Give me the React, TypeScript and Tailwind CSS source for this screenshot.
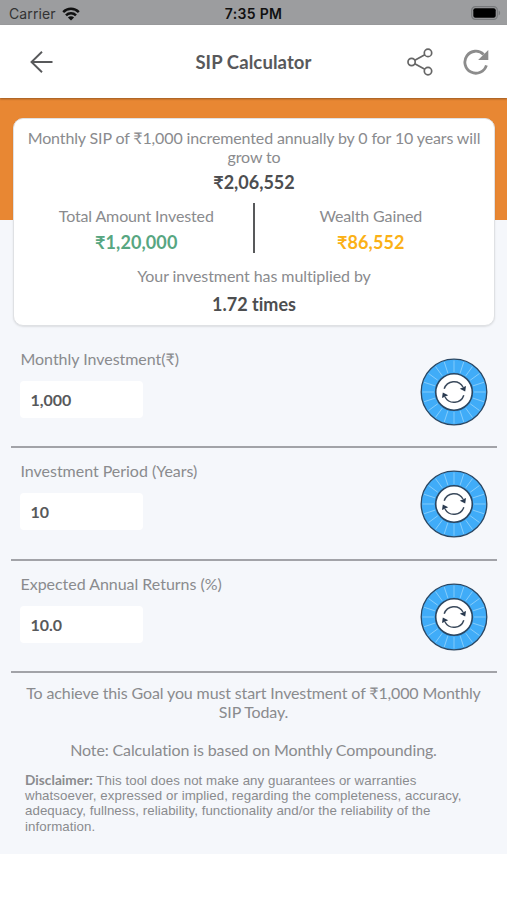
import React, { useState } from 'react';

const WifiIcon = () => (
  <svg className="w-[18px] h-[14px]" viewBox="0 0 18 14" fill="none" stroke="#111" strokeWidth="2.5">
    <path d="M1.2 5.1A11 11 0 0 1 16.8 5.1" />
    <path d="M4 8.3A7 7 0 0 1 14 8.3" />
    <path d="M9 13.6L5.9 10.5A4.4 4.4 0 0 1 12.1 10.5Z" fill="#111" stroke="none" />
  </svg>
);

const BatteryIcon = () => (
  <svg className="w-[30px] h-[14px]" viewBox="0 0 30 14">
    <rect x="0.7" y="0.7" width="25.6" height="12.6" rx="3.6" fill="none" stroke="#77797b" strokeWidth="1.2" />
    <rect x="2.3" y="2.3" width="22.4" height="9.4" rx="2" fill="#000" />
    <path d="M27.6 4.6C29.6 5.2 29.6 8.8 27.6 9.4Z" fill="#77797b" />
  </svg>
);

const BackIcon = () => (
  <svg className="w-6 h-6" viewBox="0 0 24 24" fill="none" stroke="#58595b" strokeWidth="1.9">
    <path d="M23.5 12H2.5M13 1.8L2.5 12L13 22.2" />
  </svg>
);

const ShareIcon = () => (
  <svg className="w-7 h-7" viewBox="0 0 28 28" fill="none" stroke="#666" strokeWidth="1.7">
    <circle cx="5.6" cy="14" r="3.6" />
    <circle cx="22" cy="4.9" r="3.7" />
    <circle cx="22" cy="23.1" r="3.7" />
    <path d="M8.8 12.2L18.8 6.7M8.8 15.8L18.8 21.3" />
  </svg>
);

const ReloadIcon = () => (
  <svg className="w-[26px] h-[26px]" viewBox="0 0 26 26">
    <path d="M20.6 5.4A11 11 0 1 0 23.4 16.4" fill="none" stroke="#8c8c8c" strokeWidth="2.8" />
    <path d="M25.3 1V11H15.1Z" fill="#8c8c8c" />
  </svg>
);

const spokes = Array.from({ length: 20 }, (_, i) => i * 18);

const Dial = () => (
  <svg className="w-[68px] h-[68px]" viewBox="-34 -34 68 68">
    <circle r="32.8" fill="#40acf8" stroke="#2a4763" strokeWidth="1.3" />
    {spokes.map((angle) => (
      <path key={angle} d="M0 -20V-31.5" stroke="#86cdfb" strokeWidth="0.9" transform={`rotate(${angle})`} />
    ))}
    <circle r="18.3" fill="#fff" stroke="#2a4763" strokeWidth="1.6" />
    <g fill="none" stroke="#3b4a5c" strokeWidth="1.5">
      <path d="M-9.8 -3.2A10.3 10.3 0 0 1 9 -5" />
      <path d="M9.8 3.2A10.3 10.3 0 0 1 -9 5" />
    </g>
    <path d="M5.8 -3.2L12 -6L11.2 -0.4Z" fill="#2a3b50" />
    <path d="M-5.8 3.2L-12 6L-11.2 0.4Z" fill="#2a3b50" />
  </svg>
);

const App = () => {
  const [fields, setFields] = useState([
    { label: 'Monthly Investment(₹)', value: '1,000' },
    { label: 'Investment Period (Years)', value: '10' },
    { label: 'Expected Annual Returns (%)', value: '10.0' }
  ]);

  const updateField = (idx: number, value: string) => {
    setFields((prev) => prev.map((field, i) => (i === idx ? { ...field, value } : field)));
  };

  return (
    <div className="w-full h-[900px] overflow-hidden bg-white font-['Lato','Noto_Sans',sans-serif] text-base leading-[19px] tracking-[-0.13px] [font-variant-ligatures:none] text-[#8a8b8e]">
      {/* Status Bar */}
      <div className="grid grid-cols-3 items-center h-[25px] pl-[9px] pr-[6px] pt-[2px] bg-[#9c9d9f] font-['Inter',sans-serif] text-[#111]">
        <div className="flex items-center gap-[6px]">
          <span className="text-[14px] tracking-[0.1px] text-[#333]">Carrier</span>
          <WifiIcon />
        </div>
        <span className="-ml-[3px] text-center text-[14px] tracking-[0.3px] font-semibold">7:35 PM</span>
        <div className="flex justify-end pb-px">
          <BatteryIcon />
        </div>
      </div>

      {/* Header */}
      <header className="relative grid grid-cols-[1fr_auto_1fr] items-center h-[73px] pl-[29px] pr-[18px] bg-white shadow-[0_1px_2px_rgba(0,0,0,0.35)]">
        <button className="w-6">
          <BackIcon />
        </button>
        <h1 className="-ml-[11px] pt-px text-[18.5px] tracking-[0.1px] font-bold text-[#58595b]">SIP Calculator</h1>
        <div className="flex items-center justify-end gap-[29px]">
          <button>
            <ShareIcon />
          </button>
          <button>
            <ReloadIcon />
          </button>
        </div>
      </header>

      <main className="h-[756px] bg-[#f5f7fb]">
        <div className="h-[122px] bg-[#e88733]" />

        {/* Result Card */}
        <section className="relative -mt-[102px] ml-[13px] mr-[12px] h-[208px] pt-[9px] rounded-[10px] border border-[#dfe1e4] bg-white text-center shadow-[0_1px_2px_rgba(0,0,0,0.1)]">
          <p className="px-2">Monthly SIP of ₹1,000 incremented annually by 0 for 10 years will grow to</p>
          <p className="mt-[7px] text-[18px] tracking-normal font-bold text-[#4d4e50]">₹2,06,552</p>
          <div className="flex mt-[11px] h-[50px] pl-px">
            <div className="flex-1 pl-[5px] pt-[3px]">
              <p>Total Amount Invested</p>
              <p className="mt-[8px] text-[18px] tracking-[0.1px] font-bold text-[#57a681]">₹1,20,000</p>
            </div>
            <div className="w-[2px] bg-[#58595b]" />
            <div className="flex-1 pr-[7px] pt-[3px]">
              <p>Wealth Gained</p>
              <p className="mt-[8px] text-[18px] tracking-[0.1px] font-bold text-[#fbb116]">₹86,552</p>
            </div>
          </div>
          <p className="mt-[13px] tracking-[-0.08px]">Your investment has multiplied by</p>
          <p className="mt-[10px] text-[18px] tracking-normal font-bold text-[#4d4e50]">1.72 times</p>
        </section>

        {/* Inputs */}
        <div className="mt-[9.5px] pl-[11px] pr-[10px]">
          {fields.map((field, idx) => (
            <div
              key={field.label}
              className="flex items-start justify-between h-[112.5px] pl-[9px] pr-[9px] border-b-2 border-[#a2a3a8]"
            >
              <div className="flex flex-col gap-[13px] pt-[13px]">
                <label className="pl-[0.5px] tracking-[-0.03px]">{field.label}</label>
                <input
                  value={field.value}
                  onChange={(e) => updateField(idx, e.target.value)}
                  className="w-[123px] h-[37px] px-[10.5px] rounded-[4px] bg-white font-bold tracking-normal text-[#58595b] outline-none"
                />
              </div>
              <div className="pt-[22px]">
                <Dial />
              </div>
            </div>
          ))}
        </div>

        {/* Notes */}
        <div className="pt-[9.5px] px-5 text-center">
          <p>To achieve this Goal you must start Investment of ₹1,000 Monthly SIP Today.</p>
          <p className="mt-[19px]">Note: Calculation is based on Monthly Compounding.</p>
        </div>
        <p className="mt-[14px] pl-[25px] pr-10 font-['Liberation_Sans',sans-serif] text-[13.3px] tracking-[0.06px] leading-[15.4px]">
          <span className="font-['Lato',sans-serif] text-[13.6px] font-bold leading-none">Disclaimer:</span> This tool does
          not make any guarantees or warranties whatsoever, expressed or implied, regarding the completeness, accuracy,
          adequacy, fullness, reliability, functionality and/or the reliability of the information.
        </p>
      </main>
    </div>
  );
};

export default App;
